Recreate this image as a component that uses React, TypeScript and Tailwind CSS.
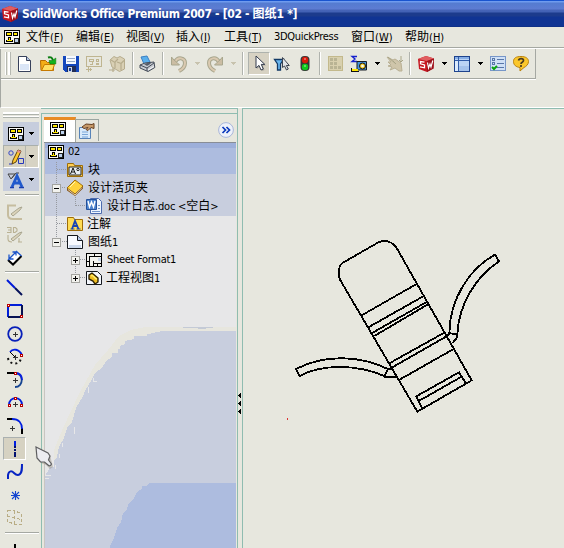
import React from "react";

type P = { children?: React.ReactNode; className?: string };

const Icon = ({ children, className = "" }: P) => (
  <svg width="16" height="16" viewBox="0 0 16 16" fill="none" className={`block shrink-0 overflow-visible ${className}`}>
    {children}
  </svg>
);

const Caret = ({ className = "", dim = false }: { className?: string; dim?: boolean }) => (
  <svg width="5" height="3" viewBox="0 0 5 3" shapeRendering="crispEdges" className={`block shrink-0 ${className}`}>
    <path d="M0 0H5V1H4V2H3V3H2V2H1V1H0Z" fill={dim ? "#c8c3ae" : "#000"} />
  </svg>
);

const Sep = ({ className = "" }: { className?: string }) => (
  <div className={`h-[23px] w-[2px] shrink-0 border-l border-r border-l-[#b0b3ad] border-r-white ${className}`} />
);

const HSep = ({ className = "" }: { className?: string }) => (
  <div className={`ml-[5px] h-[2px] w-[34px] shrink-0 border-t border-b border-t-[#a5a8a2] border-b-white ${className}`} />
);

const Drawing = ({ className = "" }: { className?: string }) => (
  <Icon className={className}>
    <g shapeRendering="crispEdges">
      <rect x="0" y="1" width="16" height="14" fill="#000" />
      <rect x="1" y="2" width="14" height="12" fill="#f8f8f4" />
      <path d="M2 3H8V7H2ZM9 3H14V7H9ZM4 8H7V11H9V13H2V11H4Z" fill="#000" />
      <path d="M3 4H7V6H3ZM10 4H13V6H10ZM5 9H6V11H8V12H3V11H5Z" fill="#ffe800" />
      <path d="M10 9H14V13H10Z" fill="#bcd2ee" stroke="#222" strokeWidth="1" />
    </g>
  </Icon>
);

const Cube = ({ className = "" }: { className?: string }) => (
  <Icon className={className}>
    <path d="M0 3 8 0l8 2.500-.5 10L9 16l-8-3z" fill="#c51620" />
    <path d="M0 3 8 0l8 2.500L9 5z" fill="#e05e60" />
    <path d="m9 5 7-2.500-.5 10L9 16z" fill="#9a121b" />
    <path d="M6.500 6.200 2.500 5.500v2.300l4 1.200v2.800L2 10.800" stroke="#fff" strokeWidth="1.300" />
    <path d="m9.500 6.500 1 5.500 1.500-4 1 3 1.800-6.500" stroke="#fff" strokeWidth="1.200" />
  </Icon>
);

const Pointer = () => (
  <Icon>
    <path d="M5 1v12l3-2.600 2 4.600 2.500-1-2-4.500H14z" fill="#777" opacity=".45" />
    <path d="M4 0v12l3-2.600 2 4.600 2.300-1-2-4.600h3.500z" fill="#fff" stroke="#333b4c" strokeWidth="1" />
  </Icon>
);

const Undo = ({ className = "" }: { className?: string }) => (
  <Icon className={className}>
    <path d="M4 6C7 0 14 2 14 7c0 3-2 6-6 8" stroke="#a9a78e" strokeWidth="4" />
    <path d="M4 6C7 0 14 2 14 7c0 3-2 6-6 8" stroke="#dac9b0" strokeWidth="2" />
    <path d="M.5 1v8h8L6 6.500 3 4z" fill="#cbbda3" stroke="#a9a78e" />
  </Icon>
);

const node = (x: number, y: number) => (
  <rect x={x} y={y} width="2" height="2" fill="#fff" stroke="#b80000" strokeWidth="1" shapeRendering="crispEdges" />
);
const plus = (x: number, y: number) => (
  <path d={`M${x - 2.5} ${y}h5M${x} ${y - 2.5}v5`} stroke="#333" strokeWidth="1" shapeRendering="crispEdges" />
);

const Expander = ({ open, className = "" }: { open: boolean; className?: string }) => (
  <svg width="9" height="9" viewBox="0 0 9 9" shapeRendering="crispEdges" className={`block shrink-0 ${className}`}>
    <rect x=".5" y=".5" width="8" height="8" fill="#f2f2ee" stroke="#a3a39f" />
    <path d={open ? "M2 4.500h5" : "M2 4.500h5M4.500 2v5"} stroke="#000" />
  </svg>
);

const Cell = ({ children, pressed = false }: { children: React.ReactNode; pressed?: boolean }) => (
  <div className={`ml-[3px] flex h-[23px] w-[23px] shrink-0 items-center justify-center pl-px ${pressed ? "border border-[#aab0b0] border-r-white border-b-white bg-[#d6d2c2]" : ""}`}>
    {children}
  </div>
);

const menuItems = [
  ["文件", "F", "w-[50px]"],
  ["编辑", "E", "w-[50px]"],
  ["视图", "V", "w-[50px]"],
  ["插入", "I", "w-[48px]"],
  ["工具", "T", "w-[50px]"],
  ["3DQuickPress", "", "w-[77px] tracking-[-0.3px]"],
  ["窗口", "W", "w-[54px]"],
  ["帮助", "H", "w-[50px]"],
];

const Menu = () => (
  <div className="flex h-[20px] shrink-0 items-center pl-1">
    <Drawing />
    <div className="ml-[6px] flex leading-[18px]">
      {menuItems.map(([t, k, w]) => (
        <span key={t} className={`${w} shrink-0 whitespace-nowrap`}>
          {k ? <><span className="text-[12px]">{t}</span>(<u className="underline-offset-1">{k}</u>)</> : t}
        </span>
      ))}
    </div>
  </div>
);

const Toolbar = () => (
  <div className="flex h-[30px] w-[535px] shrink-0 items-center border-r border-b border-[#a5a8a2] pl-[4px]">
    <div className="flex h-[23px] shrink-0 gap-px">
      <div className="w-[2px] border-l border-l-white bg-[#b5b8b1]" />
      <div className="w-[3px] border-l-2 border-l-white bg-[#b5b8b1]" />
    </div>
    <Icon className="ml-[6px]">
      <path d="M1.500.5h8l4 4v11h-12z" fill="#fff" stroke="#37415b" />
      <path d="M3 8h9v6H3z" fill="#dbe6f7" />
      <path d="M9.500.5v4h4" fill="#b5c6e2" stroke="#37415b" />
    </Icon>
    <Icon className="ml-[7px]">
      <path d="M.5 4.500h5l2 2h6v8H1z" fill="#f4ae16" stroke="#b76a00" />
      <path d="m1.500 14.500 3-6h10l-2 6z" fill="#ffdf62" stroke="#c67a00" />
      <path d="M8 1.500c3-1 4 0 5 3" stroke="#0c7d12" strokeWidth="2" />
      <path d="M9 4.500h3.500L15.800 2v6H10z" fill="#12b41d" stroke="#0c7d12" strokeWidth=".6" />
    </Icon>
    <Icon className="ml-[7px]">
      <g shapeRendering="crispEdges">
        <path d="M0 0h16v16H2l-2-2z" fill="#1347bd" />
        <path d="M3 0h10v8H3z" fill="#f7faff" />
        <path d="M4 2h8v1H4zM4 5h8v1H4z" fill="#96aaca" />
        <path d="M4 10h9v6H4z" fill="#232e55" />
        <path d="M5 11h4v5H5z" fill="#c9d6e9" />
        <path d="M6 12h2v3H6z" fill="#173e9c" />
      </g>
    </Icon>
    <Icon className="ml-[7px]">
      <g stroke="#bfb590" shapeRendering="crispEdges">
        <path d="M.5.5h15v10H.5z" strokeWidth="1.500" />
        <path d="M3.500 3.500h4v2h-4zM10.500 3.500h2v2h-2zM6.500 6v2.500h-3M10.500 7.500h2v1h-2zM0 13.500h6M2.500 11v5M4.500 12v3" />
      </g>
    </Icon>
    <Icon className="ml-[7px]">
      <path d="m1 4 4-3.500L8 2l3-1.500L15.500 3v10l-5 2.500L3 11z" fill="#d9d0b5" stroke="#b6ac8d" />
      <path d="m2 4 4 2.500V12M6 6l3-3M8 6l4 1.500V14M12 7.500l3-3M0 14h6M4 12v4" stroke="#b6ac8d" strokeWidth="1.200" />
    </Icon>
    <Sep className="ml-[7px]" />
    <Icon className="ml-[5px]">
      <path d="m2 1 6-1 3 6-6 2z" fill="#5aafec" stroke="#3b80c3" />
      <path d="m1 9 5-2 9-1 .8 5.500L9 15.500 1 12z" fill="#c7cbd1" stroke="#434b57" />
      <path d="m1 9 7 3 7-5M8 12v3" stroke="#444c59" />
      <path d="m5 8 5-1.500 2 1-4 2.500z" fill="#555d6b" />
      <path d="m9 14 6-3.500" stroke="#f7f8fa" />
    </Icon>
    <Sep className="ml-[7px]" />
    <Undo className="ml-[7px]" />
    <Caret dim className="ml-[8px]" />
    <Undo className="ml-[7px] -scale-x-100" />
    <Caret dim className="ml-[8px]" />
    <Sep className="ml-[6px]" />
    <div className="ml-[4px] flex h-[23px] w-[22px] shrink-0 items-center justify-center border border-[#aeb2ad] border-r-white border-b-white bg-[#d7d2c3] pl-[1px]">
      <Pointer />
    </div>
    <Icon className="ml-[4px]">
      <path d="M.5 3.500h9L6.500 8v6h-3V8z" fill="#67b6ef" stroke="#123966" strokeWidth="1.300" />
      <path d="M8.500 1.500v10l2-1.500 2 4 1.800-1-2-3.500h3z" fill="#e3e6e9" stroke="#3d4450" />
    </Icon>
    <Icon className="ml-[7px]">
      <rect x="3.500" y="0" width="9" height="15" rx="4" fill="#353735" />
      <circle cx="8" cy="4" r="3.200" fill="#d81808" />
      <circle cx="8" cy="11" r="3.200" fill="#0fc71e" />
      <path d="M7 3h2M7 10h2" stroke="#fff" opacity=".65" />
    </Icon>
    <Sep className="ml-[6px]" />
    <Icon className="ml-[7px]">
      <g shapeRendering="crispEdges">
        <path d="M.5.5h14v14H.5z" fill="#d8d0ae" stroke="#c3b98c" />
        <path d="M2 2h3v3H2zm4 0h3v3H6zM2 6h3v3H2zm4 0h3v3H6zM2 10h3v3H2zm4 0h3v3H6zm4 0h3v3h-3z" fill="#b9b494" />
      </g>
    </Icon>
    <Icon className="ml-[7px]">
      <path d="M6 .5H1L4 3 1 5.500h5" stroke="#1520cd" strokeWidth="1.300" />
      <path d="M6 5.500h9.500v8.500H6z" fill="#4794dc" stroke="#171d24" />
      <circle cx="11.500" cy="10" r="3" fill="#f6cb28" stroke="#111" />
      <circle cx="11.500" cy="10" r="1.300" fill="#eef9ff" />
      <path d="M0 13h7v2H0z" fill="#ffe500" />
      <path d="M0 15.500h8M.5 12v3" stroke="#111" />
    </Icon>
    <Caret className="ml-[8px]" />
    <Icon className="ml-[7px]">
      <path d="m0 1 6 3 2-1 6 4 1 8h-3l-4-3-5 2 2-3-4-1 3-1-3-3h3z" fill="#cfc5aa" stroke="#b9b094" />
      <path d="M14 0v6m-2-2 2 2 2-2M1 1l8 7M6 5l3 3" stroke="#aaa688" />
    </Icon>
    <Sep className="ml-[6px]" />
    <Cube className="ml-[7px]" />
    <Caret className="ml-[8px]" />
    <Icon className="ml-[7px]">
      <g shapeRendering="crispEdges">
        <rect x=".5" y=".5" width="15" height="15" fill="#bcd4f4" stroke="#1e438d" />
        <path d="M1 1h14v2H1z" fill="#86aee6" />
        <path d="M1 5h3v10H1z" fill="#dcebfc" />
        <path d="M5 10h10v5H5z" fill="#a6c3eb" />
        <path d="M1 4.500h14M4.500 1v14" stroke="#315ca8" />
      </g>
    </Icon>
    <Caret className="ml-[8px]" />
    <Icon className="ml-[7px]">
      <g shapeRendering="crispEdges">
        <rect x=".5" y=".5" width="15" height="14" fill="#cfe0f6" stroke="#7796c8" />
        <path d="M2.500 2.500h2v2h-2zM2.500 6.500h2v2h-2zM7 3.500h7M7 7.500h7M7 11.500h7" stroke="#5877a8" />
      </g>
      <path d="m2 11 2 2 3-3" stroke="#07a30c" strokeWidth="2" />
    </Icon>
    <Icon className="ml-[7px]">
      <path d="M8 .5c5 0 7.500 2 7.500 5S13 10.500 11 11.500l-4 3.500v-3.500C3 11 .5 9 .5 5.500S3 .5 8 .5z" fill="#fbc72c" stroke="#b9810b" />
      <path d="M5.500 4.500C6 2 10.500 2 10.500 4.500c0 2-2.500 1.500-2.500 3.500M8 9v2" stroke="#4b3b20" strokeWidth="1.700" />
    </Icon>
  </div>
);

const SketchTools = () => (
  <div className="flex w-[41px] shrink-0 flex-col overflow-hidden">
    <div className="mt-[4px] mb-[4px] ml-[3px] flex w-[36px] shrink-0 flex-col gap-px">
      <div className="h-[3px] border-t-2 border-b border-t-white border-b-[#adb2ac]" />
      <div className="h-[2px] border-t border-b border-t-white border-b-[#adb2ac]" />
    </div>
    <div className="ml-[3px] flex h-[23px] w-[36px] shrink-0 items-center bg-[#c6cddd] pl-[5px]">
      <Drawing />
      <Caret className="ml-[5px]" />
    </div>
    <div className="ml-[3px] flex h-[23px] w-[36px] shrink-0 items-center border border-[#a9afac] border-r-white border-b-white bg-[#d7d3c4]">
      <div className="flex h-full w-[22px] items-center border-r border-[#b1b4ae] pl-[4px]">
        <Icon>
          <circle cx="3" cy="4" r="2.200" stroke="#3446c8" />
          <path d="M10.500 9.500h5v5h-5zM1 15h3" stroke="#2637bb" />
          <path d="m4 15 1-4L10 1l3 1-5 11z" fill="#ffc82e" stroke="#5b4110" />
          <path d="m10 1 3 1-1 2-3-1z" fill="#e98e86" />
        </Icon>
      </div>
      <Caret className="ml-[3px]" />
    </div>
    <div className="ml-[3px] flex h-[23px] w-[36px] shrink-0 items-center bg-[#c6cddd] pl-[5px]">
      <Icon>
        <path d="M0 2h7L3 7zM4 6l4-5h3" stroke="#444" />
        <path d="m4 15 5-11 5 11M6 11h6" stroke="#2059cd" strokeWidth="2.800" />
        <path d="M2 15.500h4m5 0h5" stroke="#173db0" strokeWidth="1.500" />
      </Icon>
      <Caret className="ml-[5px]" />
    </div>
    <HSep className="mt-[3px] mb-[4px]" />
    <Cell>
      <Icon><path d="M0 1.500h9M1 2v9c0 3 2 4 5 4h9" stroke="#c6bd9f" strokeWidth="2" /><path d="m4 10 8-6 3-1-2 3-7 6z" fill="#dbd3ba" stroke="#aaa791" /></Icon>
    </Cell>
    <Cell>
      <Icon><path d="M0 .5h4v5H0m1-2.500h3M6.500.5v5h1.500l2-1.500V2L8.500.5zM1 8v4c0 3 2 3 4 3m6 0h4M12 11v4" stroke="#b9b193" strokeWidth="1.100" /><path d="m4 12 8-6 3-1-2 3-7 6z" fill="#dbd3ba" stroke="#aaa791" /></Icon>
    </Cell>
    <Cell>
      <Icon><path d="m1 10 8-8 5 4.500-8 8z" fill="#fff" /><path d="m1 10 5 4.500 8.500-8.500" stroke="#000" strokeWidth="2" /><path d="m1 10 8.500-8.500L14.500 6M2 9l7-7M2 4.500V9h4.500M5.500 2H9v3.500" stroke="#1e56ca" strokeWidth="1.300" /></Icon>
    </Cell>
    <HSep className="mt-[2px] mb-[3px]" />
    <Cell><Icon><path d="m0 0 8 8" stroke="#001ad8" strokeWidth="2" /><path d="m8 8 7 7" stroke="#051159" strokeWidth="2" /></Icon></Cell>
    <Cell>
      <Icon><g shapeRendering="crispEdges"><path d="M1 14V2h14" stroke="#001ed8" strokeWidth="2" /><path d="M15 2v12H1" stroke="#071252" strokeWidth="2" />{node(0.5, 1.5)}{node(13.5, 12.5)}</g></Icon>
    </Cell>
    <Cell><Icon><circle cx="8" cy="8" r="6.800" stroke="#0920b9" strokeWidth="1.800" />{plus(8.5, 8.5)}</Icon></Cell>
    <Cell>
      <Icon><path d="M3 3c3-4 9-3 12 3" stroke="#001de2" strokeWidth="1.800" /><path d="m3 3 5 5" stroke="#000" /><path d="M1 9c1 7 12 8 13 0" stroke="#111" strokeWidth="2" strokeDasharray="2 3" />{plus(8.5, 8.5)}{node(13.5, 5.5)}</Icon>
    </Cell>
    <Cell>
      <Icon><path d="M0 1h8" stroke="#000" strokeWidth="2" /><path d="M8 1c9 0 9 14 0 14" stroke="#164491" strokeWidth="1.800" /><path d="M8 1c5 0 7 3 7 7" stroke="#0920dd" strokeWidth="1.800" />{plus(8.5, 8.5)}{node(7.5, 0.5)}</Icon>
    </Cell>
    <Cell>
      <Icon><path d="M2 10C2 1 15 1 15 10" stroke="#001edb" strokeWidth="2" />{plus(8.5, 9.5)}{node(1.5, 9.5)}{node(13.5, 9.5)}{node(7.5, 2.5)}</Icon>
    </Cell>
    <Cell><Icon><path d="M0 1h6M15 10v6" stroke="#000" strokeWidth="2" /><path d="M5 1c7 0 10 4 10 10" stroke="#001edf" strokeWidth="1.800" />{plus(5.5, 10.5)}</Icon></Cell>
    <Cell pressed><Icon><g shapeRendering="crispEdges"><path d="M8 0v7m0 1v2m0 1v5" stroke="#02106f" strokeWidth="2" /><path d="M8 0v5" stroke="#001ee0" strokeWidth="2" /></g></Icon></Cell>
    <Cell><Icon><path d="M1 15V11C2 6 5 7 7 9s4 3 6 1 2-4 2-10" stroke="#0724c3" strokeWidth="2" /></Icon></Cell>
    <Cell><Icon><path d="M8.500 4v9M4 8.500h9M5 5l7 7m0-7-7 7" stroke="#1545d0" strokeWidth="1.100" /></Icon></Cell>
    <Cell><Icon><path d="M.5.500h6l8 3v11h-6l-8-3zM.5 6.500l14 3M7.500 1v13" stroke="#b9ad85" strokeDasharray="3 2" shapeRendering="crispEdges" /></Icon></Cell>
    <HSep className="mt-[3px] mb-[2px]" />
    <Cell><Icon><path d="M8 4v12" stroke="#000" strokeWidth="2" /></Icon></Cell>
  </div>
);

const TreeRow = ({ children, className }: P) => (
  <div className={`flex h-[18px] shrink-0 items-center whitespace-nowrap ${className}`}>{children}</div>
);

const Tree = () => (
  <div className="relative h-[406px] w-[192px] overflow-hidden border-t border-[#888d96] bg-[#e7e7e8]">
    <svg className="absolute -top-px left-0" width="192" height="406" viewBox="44 142 192 406" shapeRendering="crispEdges">
      <path d="M44 142h192v6H44z" fill="#9dafda" />
      <path d="M44 148h192v26H44z" fill="#adbcdf" />
      <path d="M44 174h192v42H44z" fill="#c8cede" />
      <path d="M236 327H145L131 330 119 336 108 350 95 365 80 392 70 413 60 435 54 450V468L236 360Z" fill="#e7e6de" />
      <path d="M236 331H162L149 334H147V336H134V339L125 341V344L120 346V349H118V353H112V357L106 361 102 368 95 373 91 381 86 389 82 398 76 408 72 422 67 428 64 438 59 447 57 457 54 460V467H50L44 478V548H236Z" fill="#c8cede" />
      <path d="M236 483H149L147 486H142V489L137 492 134 498 129 503 127 509 123 513 121 522 117 528 114 538 110 546V548H236Z" fill="#adbcdf" />
      <path d="M183 327.500h30M198 328.500h8" stroke="#c4cad6" />
      <path d="M93 378v3h4M88 387v6M74 427v7M62 443v4M59 454v4M55 465v4M45 475h6M45 478h4" stroke="#e7e7e8" strokeWidth="1" fill="none" />
      <path d="M56.500 162v76M75.500 197v9M75.500 250v29M57 169.500h9M62 187.500h4M76 205.500h10M57 223.500h9M62 241.500h5M80 259.500h6M80 277.500h6" stroke="#96999f" strokeDasharray="1 1" fill="none" />
      <path d="M44.500 142V548" stroke="#c9c5c2" />
      <path d="M44 142.500h192" stroke="#858b96" />
    </svg>
    <div className="relative flex flex-col">
      <TreeRow className="gap-[4px] pl-[4px]"><Drawing /><span className="tracking-[-0.3px]">02</span></TreeRow>
      <TreeRow className="gap-[5px] pl-[23px]">
        <Icon><path d="M.5 1.500h6l1 2h8v11H.5z" fill="#ffce54" stroke="#9e6d08" /><path d="M2 5h12v8H2z" fill="#eaf0f5" stroke="#222" /><path d="m3.500 12 2.500-6 2.500 6M4.500 10h3" stroke="#111" /><circle cx="11" cy="7.500" r="1.200" stroke="#222" /></Icon>
        <span className="text-[12px]">块</span>
      </TreeRow>
      <TreeRow className="pl-[8px]">
        <Expander open />
        <Icon className="ml-[6px]"><path d="m0 8 8-8 8 6-8 8z" fill="#ffd23c" stroke="#9e6e0b" /><path d="m0 8 8 6 8-8v2.500L8 16l-8-5.500z" fill="#855315" /><path d="m1 9.500 7 5.500 7-7.500" stroke="#f4ecd5" strokeWidth=".8" /><path d="m3 7 5-5" stroke="#fff6b7" /></Icon>
        <span className="ml-[5px] text-[12px]">设计活页夹</span>
      </TreeRow>
      <TreeRow className="pl-[42px]">
        <Icon><path d="M4.500.5h8l3 3v12h-11z" fill="#eef5ff" stroke="#4c6baf" /><path d="M.5 1.500h10v10H.5z" fill="#4b82ce" stroke="#24519c" /><path d="m2 3 1.500 6L5.500 4l2 5L9 3" stroke="#fff" strokeWidth="1.400" /><path d="M6 13.500h8M12 10.500h2M12 7.500h2" stroke="#7597cc" /></Icon>
        <span className="ml-[5px] tracking-[-0.2px]"><span className="text-[12px] tracking-normal">设计日志</span>.doc &lt;<span className="text-[12px] tracking-normal">空白</span>&gt;</span>
      </TreeRow>
      <TreeRow className="gap-[4px] pl-[23px]">
        <Icon><path d="M.5 1.500h6l1 2h8v11H.5z" fill="#ffdc54" stroke="#9e6d08" /><path d="m5 13 3-8 3.500 8M6 10h5" stroke="#1744b4" strokeWidth="1.800" /><path d="M3.500 13h4m2 0h4" stroke="#1744b4" /></Icon>
        <span className="text-[12px]">注解</span>
      </TreeRow>
      <TreeRow className="pl-[8px]">
        <Expander open />
        <Icon className="ml-[6px]"><path d="M.5 1.500h10l5 5v8H.5z" fill="#f8faff" stroke="#15191f" /><path d="M2 11h12v3H2z" fill="#cbd8ec" /><path d="M10.500 1.500v5h5" fill="#b8caea" stroke="#15191f" /></Icon>
        <span className="ml-[5px] tracking-[-0.3px]"><span className="text-[12px] tracking-normal">图纸</span>1</span>
      </TreeRow>
      <TreeRow className="pl-[27px]">
        <Expander open={false} />
        <Icon className="ml-[6px]"><g shapeRendering="crispEdges"><path d="M.5 1.500h15v13H.5z" fill="#f2f2ed" stroke="#000" /><path d="M3.500 4v10M3 4.500h12M8.500 2v2M1 9.500h2M7.500 11.500h8M7.500 9v5M11.500 11v3" stroke="#000" /><path d="M12 6h3v3h-3z" fill="#c8d7ec" /></g></Icon>
        <span className="ml-[5px] tracking-[-0.3px]">Sheet Format1</span>
      </TreeRow>
      <TreeRow className="pl-[27px]">
        <Expander open={false} />
        <Icon className="ml-[6px]"><path d="M.5 1.500h11l4 4v9H.5z" fill="#f4f7fd" stroke="#15191f" /><path d="m3 5 3-2 6 5v4l-3 2-2-3-4-2z" fill="#efbd21" stroke="#302405" strokeWidth="1.400" /><path d="M5 6c3-2 3 3 6 3" stroke="#fff276" strokeWidth="1.400" /></Icon>
        <span className="ml-[4px] tracking-[-0.3px]"><span className="text-[12px] tracking-normal">工程视图</span>1</span>
      </TreeRow>
    </div>
  </div>
);

const FeaturePanel = () => (
  <div className="flex w-[197px] shrink-0 flex-col border-t border-r border-[#8fbcb0]">
    <div className="mt-[4px] flex flex-1 flex-col border-t border-l border-[#8fbcb0] pl-[2px]">
      <div className="flex h-[28px] shrink-0 items-end">
        <div className="flex h-[25px] w-[32px] items-start justify-start border-t-[3px] border-r border-t-[#e88b25] border-r-[#a1a7a4] bg-white pt-[1px] pl-[6px]">
          <Drawing />
        </div>
        <div className="mb-[1px] flex h-[22px] w-[23px] items-center border-t border-r border-[#9ba5a1] pl-[2px]">
          <Icon><path d="M1.500 4.500h11v11h-11z" fill="#d8eafb" stroke="#5783b8" /><path d="M4 9h6M4 11.500h6M4 14h6" stroke="#79a6d8" /><path d="m4 4 4-3 6 .5 2-1v5l-3-1-3 3-2-1 2-2-4 1z" fill="#c79a69" stroke="#674022" /></Icon>
        </div>
        <svg width="16" height="16" viewBox="0 0 16 16" fill="none" className="mb-[4px] ml-[119px] block">
          <circle cx="8" cy="8" r="7.400" fill="#edf1fa" stroke="#a9b6d9" />
          <path d="m4.500 5 3 3-3 3m4-6 3 3-3 3" stroke="#0b39bd" strokeWidth="1.700" />
        </svg>
      </div>
      <Tree />
    </div>
  </div>
);

const ModelView = () => (
  <div className="flex-1 overflow-hidden border-t border-l border-[#8fbcb0]">
    <svg className="block" width="321" height="439" viewBox="243 109 321 439">
      <g transform="translate(280 230) scale(.33333)" fill="none" stroke="#000" strokeWidth="5.500" shapeRendering="crispEdges">
        <path d="M412 545 180 149Q177 143 177 135V120Q178 103 194 95L290 40Q311 27 333 38Q342 42 350 54L575 451Z" />
        <path d="M245 256 408 163M265 292 428 200M273 311 438 217M283 318 444 223M328 400 493 308M335 413 503 317M357 450 521 357" />
        <path d="M426 535 409 499 537 427 557 459M418 512 545 440" />
        <path d="M645 74C565 117 509 211 508 310L532 312C537 220 589 139 657 94ZM503 317 508 310M532 312 530 324 517 340" />
        <path d="M48 417C135 372 240 376 324 417L313 438C230 402 125 402 59 438ZM324 417H337M313 440H347" />
      </g>
      <path d="M287.500 418v2" stroke="#d33" shapeRendering="crispEdges" />
    </svg>
  </div>
);

export default function App() {
  return (
    <div className="relative flex h-[548px] w-[564px] flex-col overflow-hidden bg-[#e7e7de] font-['DejaVu_Sans_Condensed','Noto_Sans_CJK_SC',sans-serif] text-[11px] leading-[16px] text-black">
      <div className="flex h-[27px] shrink-0 items-center bg-[linear-gradient(#1954cf_0px,#1954cf_1px,#6f9bee_1px,#6f9bee_2px,#547bd0_3px,#5d7cd2_9px,#4664b7_10px,#4261b4_12px,#1c3b8c_13px,#1c3b8c_16px,#103493_17px,#103493_26px,#0d2c7c_27px)] pl-[2px] text-[12px] font-bold whitespace-nowrap text-white">
        <Cube />
        <span className="ml-[4px] tracking-[-0.34px]">SolidWorks Office Premium 2007 - [02 - <span className="tracking-normal">图纸</span>1 *]</span>
      </div>
      <Menu />
      <div className="h-[2px] shrink-0 border-t border-b border-t-[#a5a8a2] border-b-white" />
      <div className="flex h-[59px] shrink-0 flex-col border-b border-l border-b-white border-l-[#a5a8a2]">
        <Toolbar />
        <div className="h-px w-[535px] bg-white" />
      </div>
      <div className="flex h-[440px] shrink-0">
        <SketchTools />
        <FeaturePanel />
        <div className="flex w-[4px] shrink-0 flex-col items-start gap-[3px] pt-[285px]">
          {[0, 1, 2].map((i) => (
            <svg key={i} width="3" height="5" viewBox="0 0 3 5" className="block shrink-0" shapeRendering="crispEdges"><path d="M3 0v5L0 2.500z" /></svg>
          ))}
        </div>
        <ModelView />
      </div>
      <svg className="absolute top-[445px] left-[34px]" width="20" height="26" viewBox="0 0 20 26" fill="none">
        <path d="m3 5 4 13 5 2 4 4 3-2-3-12z" fill="#786e5a" opacity=".3" />
        <path d="M2 2 14 8 16 11 14.500 15 17.500 19Q16 22 14 20L10.500 17H6.500L3 13Z" fill="#ececf0" stroke="#5e5e60" strokeWidth="1.200" />
      </svg>
    </div>
  );
}
